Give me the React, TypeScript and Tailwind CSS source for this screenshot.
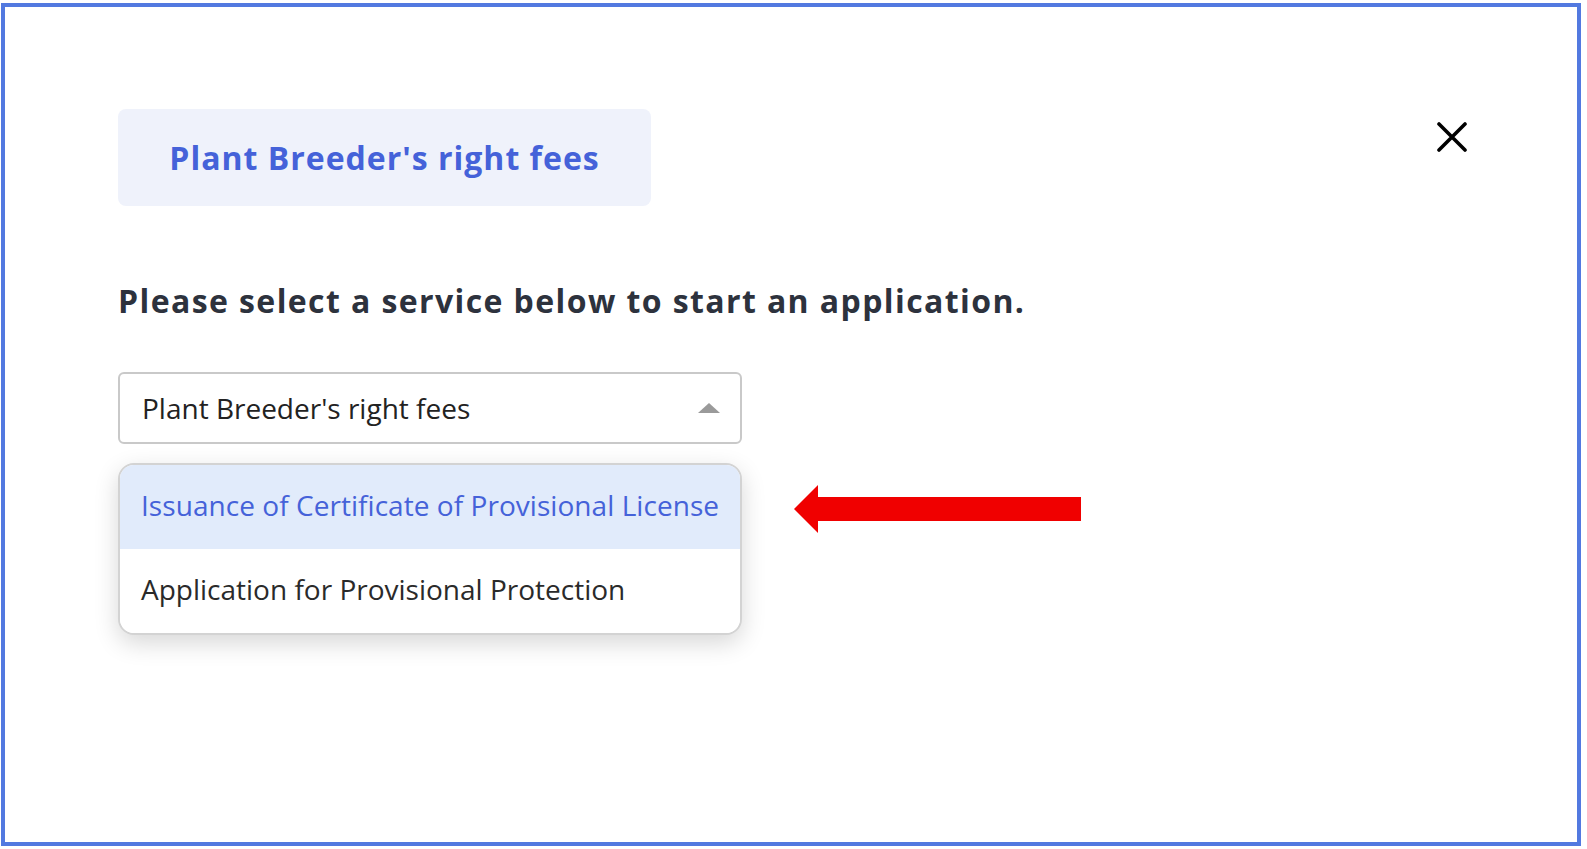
import React from "react";

export default function App() {
  return (
    <div className="w-[1587px] h-[849px] bg-white pt-[3px] pl-[1px]" style={{ fontFamily: "'Open Sans', 'Noto Sans', sans-serif" }}>
      <div className="w-[1580px] h-[843px] border-4 border-[#5279e0] bg-white pl-[113px] pr-[110px] pt-[102px] relative">
        <div className="flex items-start justify-between">
          <div className="w-[533px] h-[97px] rounded-[8px] bg-[#eff2fb] flex items-center justify-center">
            <span className="text-[32px] font-bold tracking-[1px] text-[#4562d9]">Plant Breeder's right fees</span>
          </div>
          <svg className="mt-[13px]" width="30" height="30" viewBox="0 0 30 30">
            <path d="M2 2 L28 28 M28 2 L2 28" stroke="#000" strokeWidth="3.6" strokeLinecap="round" />
          </svg>
        </div>
        <h1 className="mt-[75px] text-[32px] leading-[40px] font-bold tracking-[1.4px] text-[#2d323d]">
          Please select a service below to start an application.
        </h1>
        <div className="mt-[51px] w-[624px] h-[72px] rounded-[6px] border-2 border-[#c9c9c9] flex items-center justify-between pl-[22px] pr-[20px]">
          <span className="text-[28px] text-[#222]">Plant Breeder's right fees</span>
          <svg width="22" height="10" viewBox="0 0 22 10">
            <path d="M0 10 L11 0 L22 10 Z" fill="#9a9a9a" />
          </svg>
        </div>
        <div className="relative mt-[19px] w-[624px]">
          <div className="w-[624px] rounded-[16px] border-2 border-[#d3d3d3] bg-white overflow-hidden shadow-[0_8px_24px_rgba(0,0,0,0.16)]">
            <div className="h-[84px] bg-[#e1ebfb] flex items-center pl-[21px] pb-[4px]">
              <span className="text-[28px] tracking-[0.05px] text-[#4562d9]">Issuance of Certificate of Provisional License</span>
            </div>
            <div className="h-[84px] bg-white flex items-center pl-[21px] pb-[5px]">
              <span className="text-[28px] text-[#2a2a2a]">Application for Provisional Protection</span>
            </div>
          </div>
          <svg className="absolute left-[676px] top-[22px]" width="288" height="48" viewBox="0 0 288 48">
            <path d="M0 24 L24 0 L24 12 L287 12 L287 36 L24 36 L24 48 Z" fill="#f00000" />
          </svg>
        </div>
      </div>
    </div>
  );
}
